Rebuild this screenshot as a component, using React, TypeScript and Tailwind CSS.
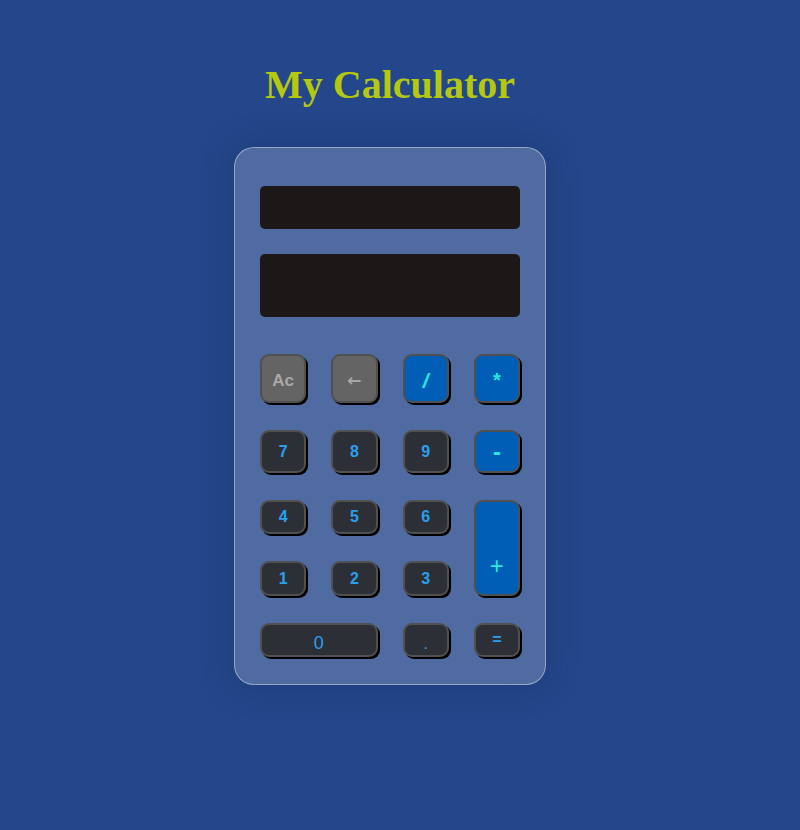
import { useState } from 'react'

type Key = {
  label: string
  kind: 'fn' | 'op' | 'num'
  className?: string
}

const keys: Key[] = [
  { label: 'Ac', kind: 'fn', className: 'text-[17px] font-bold pt-[3px]' },
  { label: '←', kind: 'fn', className: "text-[17px] font-bold pt-[3px] font-['DejaVu_Sans',sans-serif]" },
  { label: '/', kind: 'op', className: 'text-[21px] font-bold italic pt-[3px]' },
  { label: '*', kind: 'op', className: 'text-[20px] font-bold pt-[3px]' },
  { label: '7', kind: 'num', className: 'text-[16px] font-bold' },
  { label: '8', kind: 'num', className: 'text-[16px] font-bold' },
  { label: '9', kind: 'num', className: 'text-[16px] font-bold' },
  { label: '-', kind: 'op', className: 'text-[24px] font-bold' },
  { label: '4', kind: 'num', className: 'text-[16px] font-bold' },
  { label: '5', kind: 'num', className: 'text-[16px] font-bold' },
  { label: '6', kind: 'num', className: 'text-[16px] font-bold' },
  { label: '+', kind: 'op', className: 'row-span-2 text-[24px] pt-[36px]' },
  { label: '1', kind: 'num', className: 'text-[16px] font-bold' },
  { label: '2', kind: 'num', className: 'text-[16px] font-bold' },
  { label: '3', kind: 'num', className: 'text-[16px] font-bold' },
  { label: '0', kind: 'num', className: 'col-span-2 text-[18px] pt-[5px]' },
  { label: '.', kind: 'num', className: 'text-[16px] pt-[8px]' },
  { label: '=', kind: 'num', className: 'text-[16px] font-bold' },
]

const kindStyles = {
  fn: 'bg-[#646464] text-[#a8a8a8]',
  op: 'bg-[#005eb6] text-[#27e8dc]',
  num: 'bg-[#2d2f36] text-[#2a9ff0]',
}

export default function App() {
  const [expr, setExpr] = useState('')
  const [result, setResult] = useState('')

  const press = (label: string) => {
    if (label === 'Ac') {
      setExpr('')
      setResult('')
    } else if (label === '←') {
      setExpr((prev) => prev.slice(0, -1))
    } else if (label === '=') {
      try {
        // eslint-disable-next-line no-new-func
        setResult(String(Function(`return (${expr})`)()))
      } catch {
        setResult('Error')
      }
    } else {
      setExpr((prev) => prev + label)
    }
  }

  return (
    <div className="min-h-[830px] w-full bg-[#23478a] font-['Liberation_Sans',Arial,sans-serif]">
      <div className="w-[780px] flex flex-col items-center pt-[62px]">
        <h1 className="text-[40px] leading-[46px] font-bold text-[#b5c80e] font-['Liberation_Serif','Times_New_Roman',serif]">
          My Calculator
        </h1>

        <div className="mt-[39px] w-[312px] rounded-[20px] border border-white/40 bg-white/20 px-[25px] pt-[38px] pb-[27px] shadow-[0_0_30px_rgba(20,40,90,0.35)]">
          <div className="h-[43px] rounded-[5px] bg-[#1b1817] px-3 text-right text-[#a8a8a8] text-[16px] leading-[43px] overflow-hidden">
            {expr}
          </div>
          <div className="mt-[25px] h-[63px] rounded-[5px] bg-[#1b1817] px-3 text-right text-[#a8a8a8] text-[24px] leading-[63px] overflow-hidden">
            {result}
          </div>

          <div className="mt-[37px] grid grid-cols-4 grid-rows-[49px_43px_34px_35px_34px] gap-x-[25px] gap-y-[27px]">
            {keys.map((key) => (
              <button
                key={key.label}
                onClick={() => press(key.label)}
                className={`flex items-center justify-center rounded-[9px] border-2 border-[#505050] shadow-[2px_2px_0_0_#000] leading-none ${kindStyles[key.kind]} ${key.className ?? ''}`}
              >
                {key.label}
              </button>
            ))}
          </div>
        </div>
      </div>
    </div>
  )
}
